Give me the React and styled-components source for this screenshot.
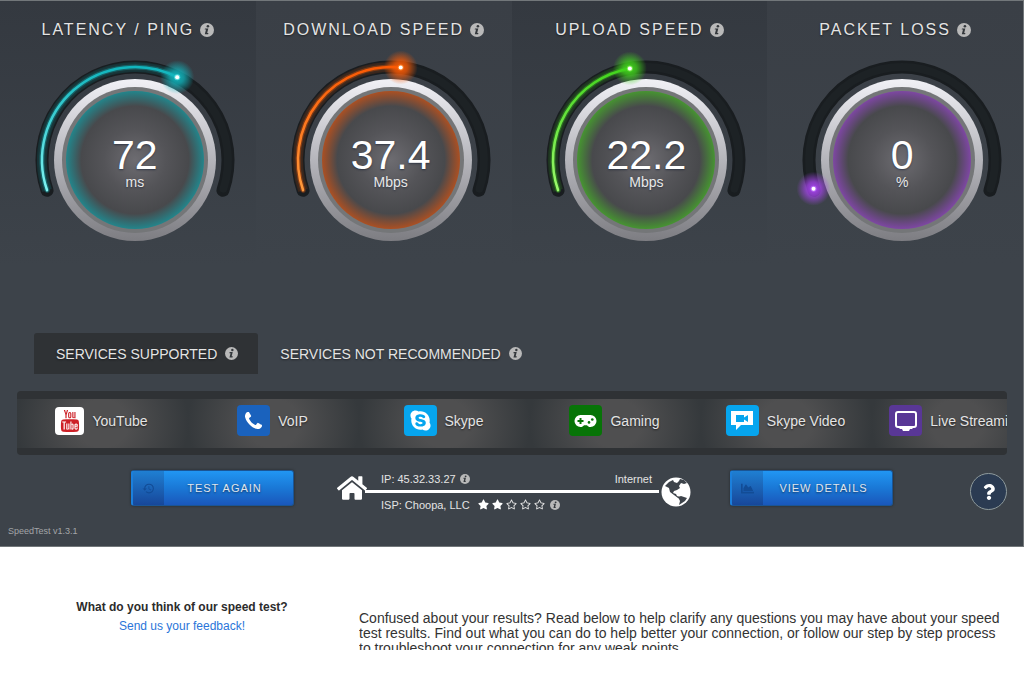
import React, { useState } from "react";
import styled, { createGlobalStyle } from "styled-components";
import {
  FaChartArea,
  FaHome,
  FaQuestion,
  FaRegStar,
  FaSkype,
  FaStar,
} from "react-icons/fa";
import { MdHistory } from "react-icons/md";
import { TfiYoutube } from "react-icons/tfi";

const GlobalStyle = createGlobalStyle`
  * {
    box-sizing: border-box;
  }
  body {
    margin: 0;
    background: #fff;
    font-family: "Liberation Sans", Arial, sans-serif;
    color: #333;
  }
  button {
    font-family: inherit;
    border: 0;
    padding: 0;
    cursor: pointer;
  }
  svg {
    display: block;
    flex: none;
    overflow: visible;
  }
`;

const gauges = [
  { id: "ping", title: "LATENCY / PING", value: "72", unit: "ms", angle: 297, color: "#11b5bd", pale: "#7ff4f2", rim: "#23858b" },
  { id: "down", title: "DOWNLOAD SPEED", value: "37.4", unit: "Mbps", angle: 276, color: "#fb5a04", pale: "#ff9a3c", rim: "#ab5023" },
  { id: "up", title: "UPLOAD SPEED", value: "22.2", unit: "Mbps", angle: 260, color: "#41d41c", pale: "#9dfb6d", rim: "#469431" },
  { id: "loss", title: "PACKET LOSS", value: "0", unit: "%", angle: 162, color: "#a845f0", pale: "#c783ff", rim: "#7e47a3" },
];

const START = 161;
const END = 379;
const RADIUS = 93;
const CX = 110;
const CY = 105;

function polar(angle) {
  const rad = (angle * Math.PI) / 180;
  return [CX + RADIUS * Math.cos(rad), CY + RADIUS * Math.sin(rad)];
}

function arc(from, to) {
  const [x1, y1] = polar(from);
  const [x2, y2] = polar(to);
  const large = to - from > 180 ? 1 : 0;
  return `M${x1} ${y1}A${RADIUS} ${RADIUS} 0 ${large} 1 ${x2} ${y2}`;
}

const Panel = styled.main`
  border: 1px solid #72777a;
  border-width: 1px 1px 1px 0;
  background: #3d434a;
  color: #e4e4e4;
`;

const GaugeGrid = styled.section`
  display: grid;
  grid-template-columns: repeat(4, 1fr);
`;

const GaugeCell = styled.article`
  display: flex;
  flex-direction: column;
  align-items: center;
  padding-top: 20px;
  background: linear-gradient(#3a3f46, #3d434a);
  &:nth-child(odd) {
    background: linear-gradient(#343940, #3d434a);
  }
`;

const GaugeTitle = styled.h2`
  display: flex;
  align-items: center;
  gap: 6px;
  margin: 0 0 16px;
  font-size: 16px;
  font-weight: normal;
  line-height: 18px;
  letter-spacing: 2px;
  text-shadow: 0 1px 2px rgba(0, 0, 0, 0.5);
`;

const InfoButton = styled.button`
  display: flex;
  background: none;
`;

const Dial = styled.div`
  display: grid;
  place-items: center;
  padding-left: 14px;
  svg,
  div {
    grid-area: 1 / 1;
  }
`;

const Reading = styled.div`
  padding-top: 6px;
  text-align: center;
  color: #fff;
  text-shadow: 0 1px 2px rgba(20, 30, 50, 0.6);
`;

const Value = styled.strong`
  display: block;
  font-size: 41px;
  font-weight: normal;
  line-height: 38px;
`;

const Unit = styled.span`
  display: block;
  font-size: 14px;
  line-height: 16px;
  color: #e8e8e8;
`;

const Tabs = styled.div`
  display: flex;
  padding: 68px 34px 0;
`;

const Tab = styled.button`
  display: flex;
  align-items: center;
  gap: 8px;
  height: 41px;
  padding: 0 20px 0 22px;
  font-size: 14px;
  color: #e4e4e4;
  border-radius: 3px 3px 0 0;
  background: ${(p) => (p.$active ? "#2f3235" : "none")};
  text-shadow: 0 1px 2px rgba(0, 0, 0, 0.5);
`;

const Services = styled.ul`
  display: flex;
  margin: 17px 16px 0 17px;
  padding: 8px 0 7px;
  list-style: none;
  overflow: hidden;
  border-radius: 4px;
  background: #2f3235;
`;

const Service = styled.li`
  display: flex;
  flex: 0 0 171px;
  align-items: center;
  justify-content: center;
  gap: 8px;
  height: 49px;
  padding: 0 2px 6px 0;
  font-size: 14px;
  white-space: nowrap;
  text-shadow: 0 1px 2px rgba(0, 0, 0, 0.6);
  background: radial-gradient(ellipse 86px 80px at center, #4f4f50 30%, #35393c 100%);
`;

const Tile = styled.span`
  display: flex;
  align-items: center;
  justify-content: center;
  width: ${(p) => (p.$small ? 29 : 33)}px;
  height: ${(p) => (p.$small ? 28 : 31)}px;
  border-radius: 4px;
  color: ${(p) => p.$color || "#fff"};
  background: ${(p) => p.$bg};
`;

const Actions = styled.div`
  display: flex;
  align-items: center;
  padding: 12px 16px 0 131px;
`;

const ActionButton = styled.button`
  display: flex;
  flex: none;
  align-items: stretch;
  width: 163px;
  height: 36px;
  margin-bottom: 7px;
  overflow: hidden;
  font-size: 11px;
  letter-spacing: 1px;
  color: #e0e6ee;
  border: 1px solid #1a5595;
  border-left: 2px solid #1b7fdc;
  border-radius: 3px;
  background: linear-gradient(#2196f3, #1a78d6 50%, #1a57bb);
  box-shadow: 0 0 3px rgba(0, 0, 0, 0.4);
  text-shadow: 0 1px 2px rgba(0, 0, 0, 0.5);
`;

const ActionIcon = styled.span`
  display: flex;
  align-items: center;
  justify-content: center;
  width: 31px;
  color: #124c96;
  background: linear-gradient(#1f7fd2, #17479a);
`;

const ActionLabel = styled.span`
  flex: 1;
  align-self: center;
  padding-right: 8px;
`;

const Network = styled.div`
  display: flex;
  flex: 1;
  align-items: center;
  margin: 0 39px 0 43px;
  color: #fff;
`;

const HomeMark = styled.span`
  padding-bottom: 8px;
`;

const Route = styled.div`
  flex: 1;
  font-size: 11px;
  line-height: 14px;
  color: #e4e4e4;
`;

const RouteRow = styled.div`
  display: flex;
  align-items: center;
  gap: 4px;
  height: 23px;
  padding: 0 9px 0 14px;
`;

const Far = styled.span`
  margin-left: auto;
`;

const Wire = styled.hr`
  height: 3px;
  margin: 0 2px 0 -2px;
  border: 0;
  background: #fff;
`;

const Stars = styled.span`
  display: flex;
  gap: 3px;
  margin: 0 1px 0 4px;
`;

const HelpButton = styled.button`
  display: flex;
  flex: none;
  align-items: center;
  justify-content: center;
  width: 37px;
  height: 37px;
  margin-left: 77px;
  color: #fff;
  border: 1px solid #8e9a9c;
  border-radius: 50%;
  background: #2b3b52;
`;

const Version = styled.p`
  margin: 0;
  padding: 10px 8px;
  font-size: 9px;
  line-height: 10px;
  color: #a3a5a8;
`;

const Below = styled.section`
  display: flex;
  padding: 51px 24px 0 32px;
`;

const Feedback = styled.div`
  flex: 0 0 300px;
  font-size: 12px;
  line-height: 19px;
  text-align: center;
  a {
    color: #2a75d9;
    text-decoration: none;
  }
`;

const Question = styled.strong`
  display: block;
  color: #2c2c2c;
`;

const Intro = styled.p`
  flex: 1;
  max-height: 39px;
  margin: 13px 0 0 27px;
  overflow: hidden;
  font-size: 14px;
  line-height: 15px;
`;

function InfoIcon({ size = 14 }) {
  return (
    <svg width={size} height={size} viewBox="0 0 14 14" aria-hidden="true">
      <circle cx="7" cy="7" r="7" fill="#b9b9b9" />
      <circle cx="7.9" cy="3.3" r="1.3" fill="#34383c" />
      <path d="M5 5.4h3.3L7.2 10h1.2l-.3 1.2H4.8L6 6.6H4.7z" fill="#34383c" />
    </svg>
  );
}

function Info({ label, size }) {
  return (
    <InfoButton type="button" aria-label={label}>
      <InfoIcon size={size} />
    </InfoButton>
  );
}

function PhoneIcon() {
  return (
    <svg width="17" height="17" viewBox="0 0 1408 1408" fill="currentColor">
      <path d="M1408 1112q0 27-10 70.5t-21 68.5q-21 50-122 106-94 51-186 51-27 0-53-3.5t-57.5-12.5-47-14.5-55.5-20.5-49-18q-98-35-175-83-127-79-264-216t-216-264q-48-77-83-175-3-9-18-49t-20.5-55.5-14.5-47-12.5-57.5-3.5-53q0-92 51-186 56-101 106-122 25-11 68.5-21t70.5-10q14 0 21 3 18 6 53 76 11 19 30 54t35 63.5 31 53.5q3 4 17.5 25t21.5 35.5 7 28.5q0 20-28.5 50t-62 55-62 53-28.5 46q0 9 5 22.5t8.5 20.5 14 24 11.5 19q76 137 174 235t235 174q2 1 19 11.5t24 14 20.5 8.5 22.5 5q18 0 46-28.5t53-62 55-62 50-28.5q14 0 28.5 7t35.5 21.5 25 17.5q25 15 53.5 31t63.5 35 54 30q70 35 76 53 3 7 3 21z" />
    </svg>
  );
}

function GamepadIcon() {
  return (
    <svg width="23" height="14" viewBox="0 0 23 14">
      <path
        d="M6.5 1h10a6 6 0 0 1 0 12c-1.7 0-2.6-.8-3.5-1.8h-3C9.1 12.2 8.2 13 6.5 13a6 6 0 0 1 0-12z"
        fill="#fff"
      />
      <path d="M5.5 4h2v2h2v2h-2v2h-2V8h-2V6h2z" fill="#077407" />
      <circle cx="15" cy="8.4" r="1.3" fill="#077407" />
      <circle cx="18.3" cy="5.5" r="1.3" fill="#077407" />
    </svg>
  );
}

function VideoIcon() {
  return (
    <svg width="22" height="21" viewBox="0 0 22 21">
      <path d="M0 1h22v14H10l-5 5v-5H0z" fill="#fff" />
      <path d="M5 5h8v2.5L17 5v7l-4-2.500V12H5z" fill="#06a5ee" />
    </svg>
  );
}

function TvIcon() {
  return (
    <svg width="22" height="20" viewBox="0 0 22 20">
      <rect x="1" y="1" width="20" height="15" rx="2" fill="none" stroke="#fff" strokeWidth="2" />
      <path d="M3 16h16l-2 2h-2l-1 2H8l-1-2H5z" fill="#fff" />
    </svg>
  );
}

function GlobeIcon() {
  return (
    <svg width="30" height="30" viewBox="0 0 30 30">
      <circle cx="15" cy="15" r="14.5" fill="#fff" />
      <path
        d="M4 9l4-4 4-2 1 2 3 1 2-2 1-2 4 1 3 3-3 1-3-1-2 3 1 2-3 2-3 1-1 2 3 1 1 2 3 1 1 2-3-1-4-3-4-3-1-4z"
        fill="#3d434a"
      />
      <path d="M17 20l3-1 3 1 3 1-2 3-3 2-3 2 1-4z" fill="#3d434a" />
    </svg>
  );
}

const services = [
  { name: "YouTube", bg: "#fff", color: "#cd2027", small: true, icon: <TfiYoutube size={22} /> },
  { name: "VoIP", bg: "#1a62bd", icon: <PhoneIcon /> },
  { name: "Skype", bg: "#06a5ee", icon: <FaSkype size={23} /> },
  { name: "Gaming", bg: "#077407", icon: <GamepadIcon /> },
  { name: "Skype Video", bg: "#06a5ee", icon: <VideoIcon /> },
  { name: "Live Streaming", bg: "#593796", icon: <TvIcon /> },
];

function Gauge({ gauge }) {
  const { id, title, value, unit, angle, color, pale, rim } = gauge;
  const [x, y] = polar(angle);

  return (
    <GaugeCell>
      <GaugeTitle>
        {title}
        <Info label={`About ${title.toLowerCase()}`} />
      </GaugeTitle>
      <Dial>
        <svg width="220" height="210" viewBox="0 0 220 210" aria-hidden="true">
          <defs>
            <linearGradient id={`${id}-bezel`} x1="0" y1="0" x2="0" y2="1">
              <stop offset="0" stopColor="#f1f1f6" />
              <stop offset="0.5" stopColor="#b5b5bb" />
              <stop offset="1" stopColor="#7d7d82" />
            </linearGradient>
            <radialGradient id={`${id}-face`}>
              <stop offset="0" stopColor="#6d6c71" />
              <stop offset="0.45" stopColor="#545458" />
              <stop offset="0.78" stopColor="#48494c" />
              <stop offset="1" stopColor={rim} />
            </radialGradient>
            <radialGradient id={`${id}-glow`}>
              <stop offset="0" stopColor={color} />
              <stop offset="0.4" stopColor={color} stopOpacity="0.75" />
              <stop offset="1" stopColor={color} stopOpacity="0" />
            </radialGradient>
            <linearGradient id={`${id}-line`} gradientUnits="userSpaceOnUse" x1="0" y1="12" x2="0" y2="135">
              <stop offset="0" stopColor={color} />
              <stop offset="1" stopColor={pale} />
            </linearGradient>
          </defs>
          <path d={arc(START, END)} fill="none" stroke="#191d20" strokeWidth="13" strokeLinecap="round" />
          <path d={arc(START + 1, END - 1)} fill="none" stroke="#1d2225" strokeWidth="8" strokeLinecap="round" />
          {value !== "0" && (
            <>
              <path d={arc(START, angle)} fill="none" stroke={color} strokeOpacity="0.14" strokeWidth="10" />
              <path d={arc(START, angle)} fill="none" stroke={color} strokeOpacity="0.35" strokeWidth="5" strokeLinecap="round" />
              <path d={arc(START, angle)} fill="none" stroke={`url(#${id}-line)`} strokeWidth="2.5" strokeLinecap="round" />
            </>
          )}
          <circle cx={CX} cy={CY} r="81" fill={`url(#${id}-bezel)`} />
          <circle cx={CX} cy={CY} r="73" fill="#747678" />
          <circle cx={CX} cy={CY} r="69" fill={`url(#${id}-face)`} />
          <circle cx={x} cy={y} r="17" fill={`url(#${id}-glow)`} />
          <circle cx={x} cy={y} r="3" fill={pale} fillOpacity="0.6" />
          <circle cx={x} cy={y} r="2" fill="#fff" />
        </svg>
        <Reading>
          <Value>{value}</Value>
          <Unit>{unit}</Unit>
        </Reading>
      </Dial>
    </GaugeCell>
  );
}

export default function App() {
  const [tab, setTab] = useState("supported");

  return (
    <>
      <GlobalStyle />
      <Panel>
        <GaugeGrid>
          {gauges.map((gauge) => (
            <Gauge key={gauge.id} gauge={gauge} />
          ))}
        </GaugeGrid>

        <Tabs role="tablist">
          <Tab role="tab" aria-selected={tab === "supported"} $active={tab === "supported"} onClick={() => setTab("supported")}>
            SERVICES SUPPORTED
            <InfoIcon size={13} />
          </Tab>
          <Tab role="tab" aria-selected={tab === "other"} $active={tab === "other"} onClick={() => setTab("other")}>
            SERVICES NOT RECOMMENDED
            <InfoIcon size={13} />
          </Tab>
        </Tabs>

        <Services>
          {services.map((service) => (
            <Service key={service.name}>
              <Tile $bg={service.bg} $color={service.color} $small={service.small}>
                {service.icon}
              </Tile>
              {service.name}
            </Service>
          ))}
        </Services>

        <Actions>
          <ActionButton type="button">
            <ActionIcon>
              <MdHistory size={13} />
            </ActionIcon>
            <ActionLabel>TEST AGAIN</ActionLabel>
          </ActionButton>

          <Network>
            <HomeMark>
              <FaHome size={30} />
            </HomeMark>
            <Route>
              <RouteRow>
                IP: 45.32.33.27
                <Info label="About your IP address" size={10} />
                <Far>Internet</Far>
              </RouteRow>
              <Wire />
              <RouteRow>
                ISP: Choopa, LLC
                <Stars role="img" aria-label="2 out of 5 stars">
                  {[1, 2, 3, 4, 5].map((n) =>
                    n <= 2 ? <FaStar key={n} size={11} color="#fff" /> : <FaRegStar key={n} size={11} />
                  )}
                </Stars>
                <Info label="About your provider's rating" size={10} />
              </RouteRow>
            </Route>
            <GlobeIcon />
          </Network>

          <ActionButton type="button">
            <ActionIcon>
              <FaChartArea size={13} />
            </ActionIcon>
            <ActionLabel>VIEW DETAILS</ActionLabel>
          </ActionButton>

          <HelpButton type="button" aria-label="Help">
            <FaQuestion size={16} />
          </HelpButton>
        </Actions>

        <Version>SpeedTest v1.3.1</Version>
      </Panel>

      <Below>
        <Feedback>
          <Question>What do you think of our speed test?</Question>
          <a href="#feedback">Send us your feedback!</a>
        </Feedback>
        <Intro>
          Confused about your results? Read below to help clarify any questions you may have about your speed
          test results. Find out what you can do to help better your connection, or follow our step by step
          process to troubleshoot your connection for any weak points.
        </Intro>
      </Below>
    </>
  );
}
